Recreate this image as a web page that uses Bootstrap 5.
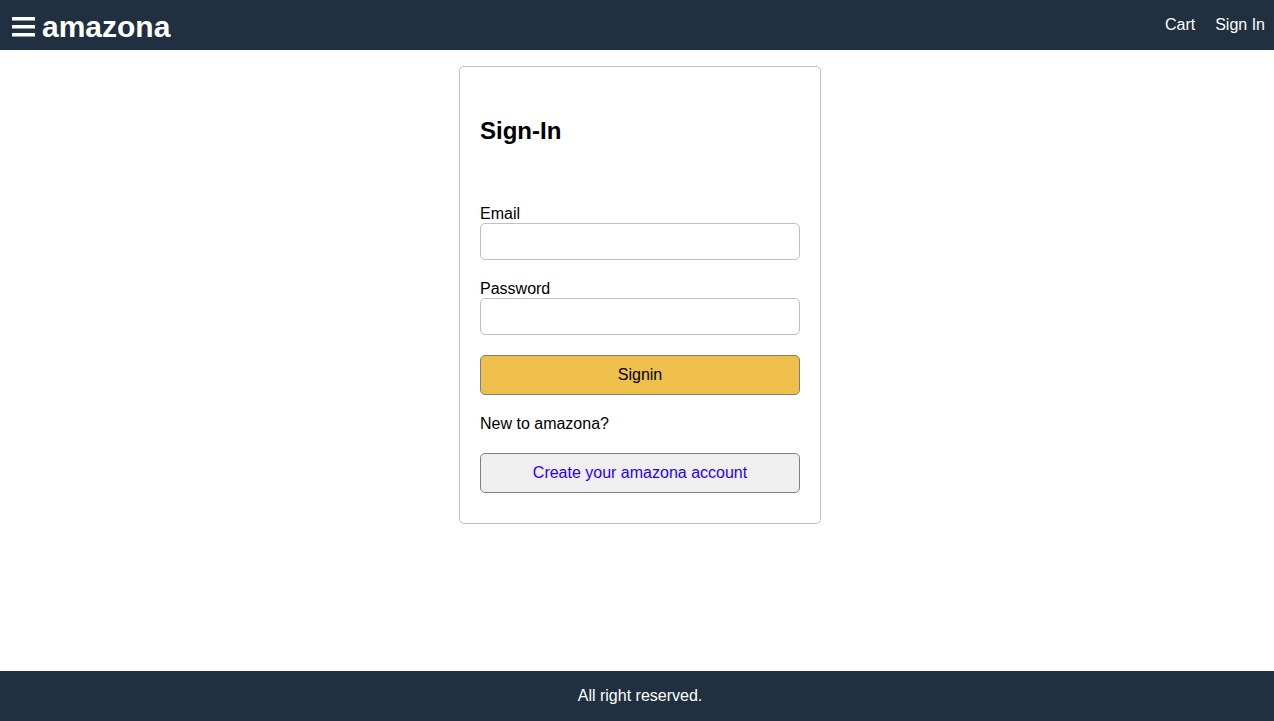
<!DOCTYPE html>
<html lang="en">
<head>
<meta charset="utf-8">
<meta name="viewport" content="width=device-width, initial-scale=1">
<title>amazona</title>
<link href="https://cdn.jsdelivr.net/npm/bootstrap@5.3.0/dist/css/bootstrap.min.css" rel="stylesheet">
<style>
  body { font-family: "Liberation Sans", Arial, sans-serif; font-size: 16px; line-height: 18px; color: #000; background: #fff; }
  .site-bar { background: #203040; color: #fff; height: 50px; }
  .site-bar a { color: #fff; }
  .brand-group { gap: 6px; padding: 4px 0 0 12px; }
  .brand-link { font-size: 30px; line-height: 34px; }
  .menu-toggle { width: 24px; height: 24px; }
  .account-nav { gap: 20px; padding-right: 9px; }
  .page-area { padding: 16px 0 16px 6px; }
  .site-footer { padding-left: 6px; }
  .signin-card { width: 362px; max-width: 100%; border: 1px solid #c0c0c0; border-radius: 5px; padding: 50px 20px 30px; gap: 20px; }
  .signin-title { font-size: 24px; line-height: 28px; margin-bottom: 40px; }
  .signin-card .form-control { height: 37px; border: 1px solid #c0c0c0; border-radius: 5px; color: #000; }
  .signin-card .btn { height: 40px; padding: 0 10px; line-height: 18px; border: 1px solid #808080; border-radius: 5px; }
  .signin-card .btn-signin, .signin-card .btn-signin:hover { background: #eebf4a; color: #000; }
  .signin-card .btn-create, .signin-card .btn-create:hover { background: #efefef; color: #2a00ee; }
</style>
</head>
<body class="d-flex flex-column min-vh-100">
  <header class="site-bar d-flex align-items-center justify-content-between">
    <div class="brand-group d-flex align-items-center">
      <button type="button" class="menu-toggle btn p-0 border-0 d-flex" aria-label="Open menu">
        <svg width="24" height="24" viewBox="0 0 24 24" fill="#fff" aria-hidden="true">
          <path d="M0 2h23v3.6H0zM0 10h23v3.6H0zM0 18h23v3.6H0z"/>
        </svg>
      </button>
      <a href="#" class="brand-link fw-bold text-decoration-none">amazona</a>
    </div>
    <nav class="account-nav d-flex" aria-label="Account">
      <a href="#" class="text-decoration-none">Cart</a>
      <a href="#" class="text-decoration-none">Sign In</a>
    </nav>
  </header>

  <main class="page-area flex-grow-1">
    <form class="signin-card d-flex flex-column mx-auto">
      <h2 class="signin-title fw-bold mt-0">Sign-In</h2>
      <div>
        <label for="email" class="d-block">Email</label>
        <input type="email" id="email" name="email" class="form-control">
      </div>
      <div>
        <label for="password" class="d-block">Password</label>
        <input type="password" id="password" name="password" class="form-control">
      </div>
      <button type="submit" class="btn btn-signin w-100">Signin</button>
      <div>New to amazona?</div>
      <a href="#" class="btn btn-create w-100 d-flex align-items-center justify-content-center">Create your amazona account</a>
    </form>
  </main>

  <footer class="site-bar site-footer d-flex align-items-center justify-content-center">All right reserved.</footer>
<script src="https://cdn.jsdelivr.net/npm/bootstrap@5.3.0/dist/js/bootstrap.bundle.min.js"></script>
</body>
</html>
